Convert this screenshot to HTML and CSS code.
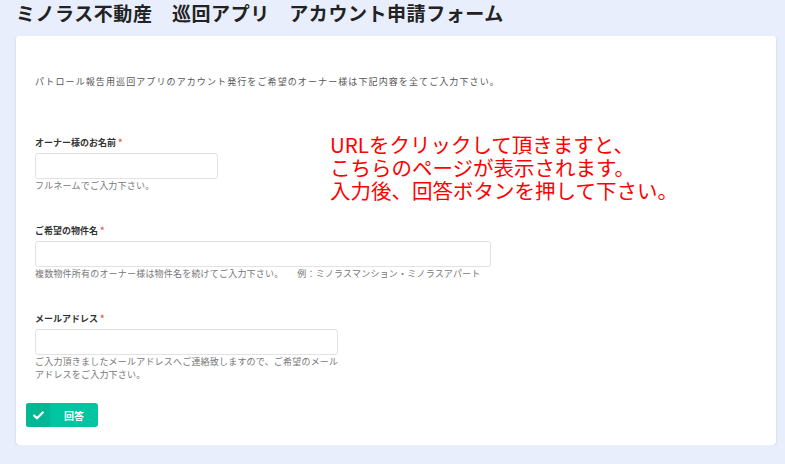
FILE: index.html
```html
<!DOCTYPE html>
<html lang="ja">
  <head>
    <meta charset="UTF-8" />
    <meta name="viewport" content="width=device-width, initial-scale=1.0" />
    <title>アカウント申請フォーム</title>
    <link rel="stylesheet" href="styles.css">
  </head>
  <body>
    <h1 class="title">ミノラス不動産　巡回アプリ　アカウント申請フォーム</h1>
    <div class="card">
      <p class="intro">パトロール報告用巡回アプリのアカウント発行をご希望のオーナー様は下記内容を全てご入力下さい。</p>

      <div class="field">
        <label class="label" for="owner-name">オーナー様のお名前<span class="req">*</span></label>
        <input type="text" id="owner-name" class="input input-short" />
        <div class="help">フルネームでご入力下さい。</div>
      </div>

      <div class="field">
        <label class="label" for="property">ご希望の物件名<span class="req">*</span></label>
        <input type="text" id="property" class="input input-long" />
        <div class="help">複数物件所有のオーナー様は物件名を続けてご入力下さい。　　例：ミノラスマンション・ミノラスアパート</div>
      </div>

      <div class="field">
        <label class="label" for="mail">メールアドレス<span class="req">*</span></label>
        <input type="text" id="mail" class="input input-mid" />
        <div class="help help-narrow">ご入力頂きましたメールアドレスへご連絡致しますので、ご希望のメール<br>アドレスをご入力下さい。</div>
      </div>

      <button class="submit">
        <span class="submit-icon">
          <svg width="11" height="9" viewBox="0 0 11 9"><polyline points="1.2,4.6 4,7.3 9.8,1.5" fill="none" stroke="#fff" stroke-width="2.2" stroke-linecap="round" stroke-linejoin="round"/></svg>
        </span>
        <span class="submit-text">回答</span>
      </button>

      <!-- annotation -->
      <div class="note">URLをクリックして頂きますと、<br>こちらのページが表示されます。<br>入力後、回答ボタンを押して下さい。</div>
    </div>
  </body>
</html>
```

FILE: styles.css
```css
body {
  margin: 0;
  background-color: #e9eefc;
  font-family: "Noto Sans CJK JP", "Noto Sans", sans-serif;
}
.title {
  margin: 0;
  padding-left: 16px;
  height: 26px;
  font-size: 19px;
  line-height: 26px;
  letter-spacing: 0.55px;
  font-weight: bold;
  color: #222;
}
.card {
  position: relative;
  margin: 10px 9px 0 16px;
  padding: 39px 20px 18px 10px;
  background: white;
  border-radius: 3px;
  box-shadow: 0 1px 2px rgba(0, 0, 0, 0.18);
}
.intro {
  margin: 0 0 47px 9px;
  font-size: 9px;
  line-height: 14px;
  letter-spacing: 1.1px;
  color: #555;
}
.field {
  padding-left: 9px;
  margin-bottom: 32px;
}
.field:nth-of-type(3) {
  margin-bottom: 22px;
}
.label {
  display: block;
  margin-bottom: 3px;
  font-size: 9px;
  line-height: 14px;
  font-weight: bold;
  color: #333;
}
.req {
  color: #e8584a;
  margin-left: 2px;
}
.input {
  display: block;
  box-sizing: border-box;
  height: 26px;
  border: 1px solid #e2e2e2;
  border-radius: 3px;
  background: white;
  margin: 0;
}
.input-short {
  width: 183px;
}
.input-long {
  width: 456px;
}
.input-mid {
  width: 303px;
}
.help {
  font-size: 9px;
  line-height: 13px;
  letter-spacing: 0.2px;
  color: #777;
}
.help-narrow {
  width: 320px;
}
.submit {
  display: flex;
  align-items: stretch;
  width: 72px;
  height: 24px;
  padding: 0;
  border: none;
  border-radius: 3px;
  overflow: hidden;
  background: #00c5a1;
  cursor: pointer;
}
.submit-icon {
  width: 24px;
  display: flex;
  align-items: center;
  justify-content: center;
  background: #00b994;
}
.submit-text {
  flex: 1;
  display: flex;
  align-items: center;
  justify-content: center;
  font-family: "Noto Sans CJK JP", sans-serif;
  font-size: 10px;
  font-weight: bold;
  color: white;
}
.note {
  position: absolute;
  left: 314px;
  top: 97px;
  font-size: 20.5px;
  line-height: 23px;
  color: #ff0000;
}
```
